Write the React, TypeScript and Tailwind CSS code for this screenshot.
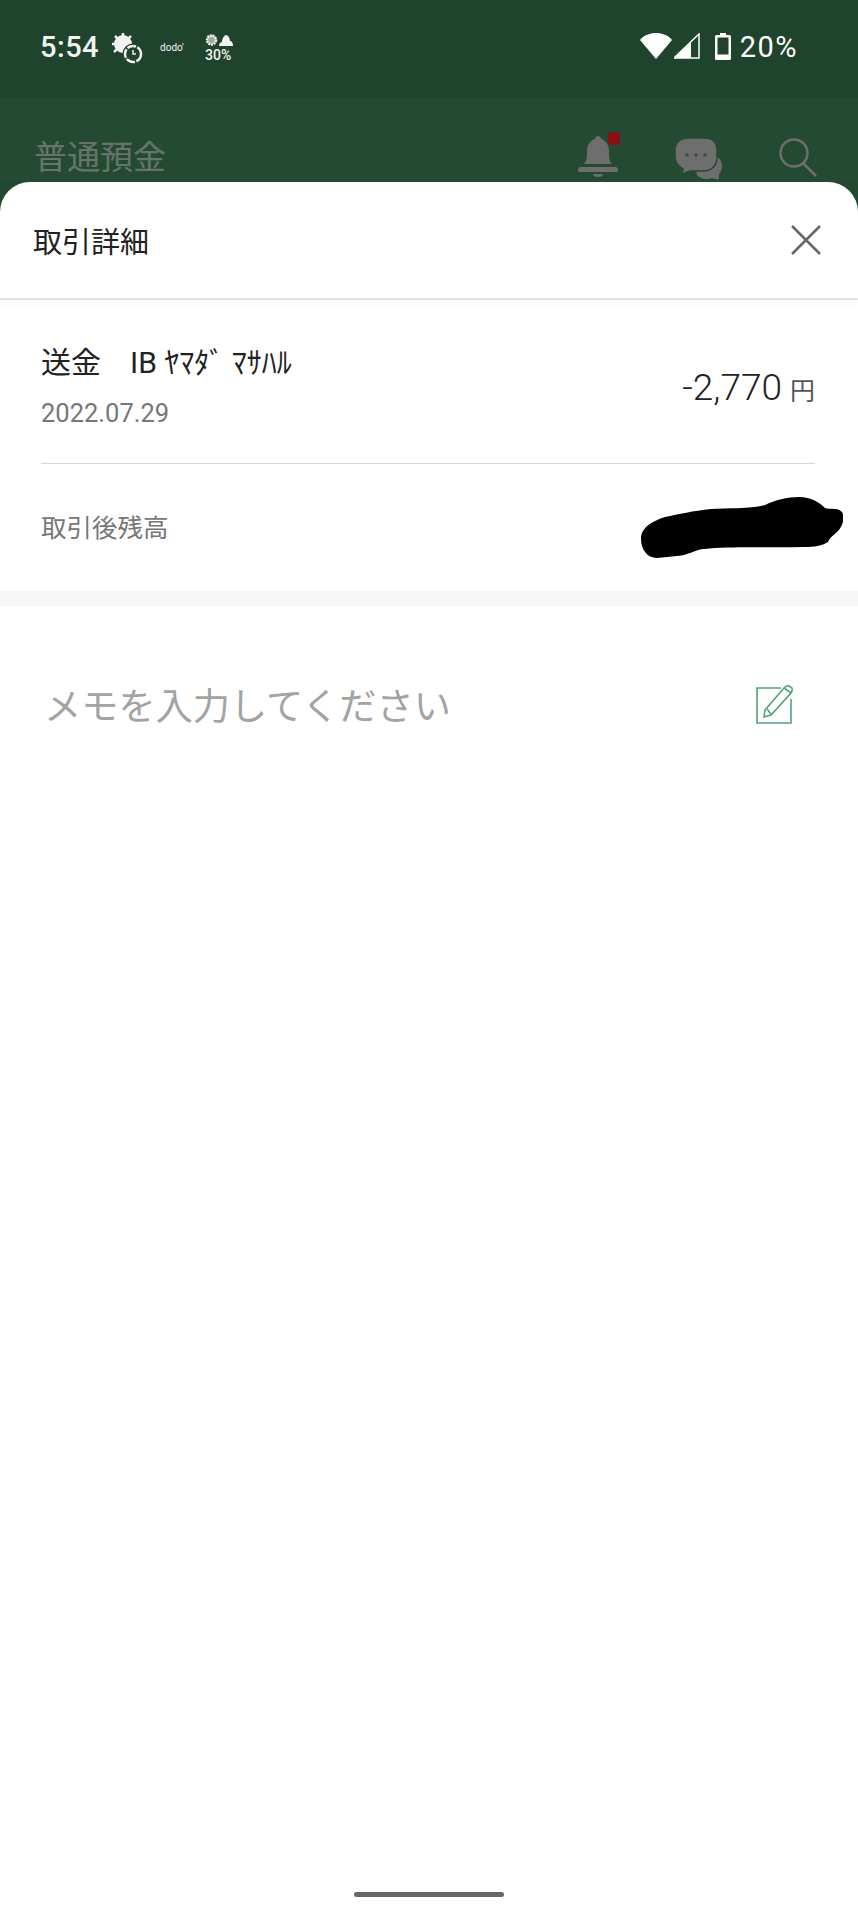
const font = "font-['Roboto','Noto_Sans_CJK_JP',sans-serif]"

function WeatherClock() {
  return (
    <svg width="32" height="32" viewBox="0 0 32 32" fill="#f2f2f2">
      <circle cx="12" cy="11" r="9" />
      <path d="M12 0v4M1 11h3M4 3l3 3M20 3l-3 3M3 19l3-3" stroke="#f2f2f2" strokeWidth="2.500" />
      <circle cx="22" cy="21" r="10.500" fill="#1f432c" />
      <circle cx="22" cy="21" r="8" fill="none" stroke="#f2f2f2" strokeWidth="2.500" strokeDasharray="9 1.500" />
      <path d="M22 17v4h3" fill="none" stroke="#f2f2f2" strokeWidth="1.500" />
    </svg>
  )
}

function SunCloud() {
  return (
    <svg width="28" height="15" viewBox="0 0 28 15" fill="#f2f2f2">
      <circle cx="6.500" cy="7" r="4.500" stroke="#f2f2f2" strokeWidth="2.500" strokeDasharray="2 0.700" fillOpacity="0.600" />
      <path d="M14 13c0-3 2-4 3-4 0-3 2-7 4-7s4 3 4 6c2 0 3 2 3 5z" />
    </svg>
  )
}

function Wifi() {
  return (
    <svg width="32" height="26" viewBox="0 0 32 26" fill="#fff">
      <path d="M0 7C4 2 10 0 16 0s12 2 16 7L16 26z" />
    </svg>
  )
}

function Signal() {
  return (
    <svg width="26" height="26" viewBox="0 0 26 26">
      <path d="M0 25 25 1v24z" fill="none" stroke="#fff" strokeWidth="1.500" />
      <path d="M0 25 17 9v16z" fill="#fff" />
    </svg>
  )
}

function Battery() {
  return (
    <svg width="16" height="27" viewBox="0 0 16 27">
      <path d="M5 0h6v2h3.500A1.500 1.500 0 0 1 16 3.500v22a1.500 1.500 0 0 1-1.500 1.500h-13A1.500 1.500 0 0 1 0 25.500v-22A1.500 1.500 0 0 1 1.500 2H5z" fill="#fff" />
      <rect x="2.500" y="4.500" width="11" height="17" fill="#1f432c" />
    </svg>
  )
}

function Bell() {
  return (
    <svg width="44" height="46" viewBox="0 0 44 46" fill="#6e6e6e">
      <path d="M7 32c3-3 3-7 3-13 0-7 4-11 8-12 0-4 6-4 6 0 4 1 8 5 8 12 0 6 0 10 3 13z" />
      <path d="M1 38c0-2 1-3 3-3h34c2 0 3 1 3 3s-1 2-3 2H4c-2 0-3 0-3-2z" />
      <path d="M16 42h10c0 2-2 3-5 3s-5-1-5-3z" />
      <rect x="31" y="0" width="12" height="13" rx="4" fill="#8b0f14" />
    </svg>
  )
}

function Chat() {
  return (
    <svg width="48" height="42" viewBox="0 0 48 42">
      {/* small bubble behind */}
      <path d="M22 30c6 0 14-4 18-12 4 1 7 5 7 10 0 3-1 6-3 8v4c0 1-2 2-4 1l-3-1c-5 2-12 1-15-3-1-2-1-4 0-7z" fill="#6e6e6e" />
      {/* main bubble */}
      <path d="M13 0h16c9 0 13 5 13 12v8c0 8-6 13-14 13H15l-8 3 1-5C3 28 0 24 0 19v-7C0 5 5 0 13 0z" fill="#6e6e6e" stroke="#254a34" strokeWidth="1.500" />
      <circle cx="12" cy="17" r="1.800" fill="#35503f" />
      <circle cx="21" cy="17" r="1.800" fill="#35503f" />
      <circle cx="30" cy="17" r="1.800" fill="#35503f" />
    </svg>
  )
}

function Search() {
  return (
    <svg width="40" height="40" viewBox="0 0 40 40" fill="none" stroke="#6e6e6e" strokeWidth="2.500">
      <circle cx="16" cy="15" r="13.500" />
      <path d="M25 25 38 38" />
    </svg>
  )
}

function Blob() {
  return (
    <svg width="202" height="62" viewBox="0 0 202 62" fill="#000">
      <path d="M16 61C6 61 0 52 0 42 0 30 12 24 24 20c14-3 28-6 46-8 16-1 40 0 54-4 10-5 22-8 34-8 12 0 20 5 26 11 6 2 12-1 17 4 3 5 1 13-3 18-5 5-8 6-11 12-6 4-14 5-24 5-34 1-72-1-100 2-8 0-14 6-27 7z" />
    </svg>
  )
}

function EditIcon() {
  return (
    <svg width="38" height="40" viewBox="0 0 38 40" fill="none" stroke="#4fa378" strokeWidth="1.600">
      <path d="M25 4H1v35h34V15" />
      <path d="M9 26 28 4c1-1 3-3 5-2l3 2c1 2 0 3-1 5L15 31l-7 2z" />
      <path d="M28 4l7 5M11 25l4 5" />
    </svg>
  )
}

export default function App() {
  return (
    <div className={`${font} flex h-[1907px] w-[858px] flex-col overflow-hidden bg-[#234832]`}>
      {/* status bar */}
      <div className="flex h-[98px] items-start justify-between bg-[#1f432c] pl-[40px] pr-[60px] pt-[33px] text-[#f4f4f4]">
        <div className="flex items-start">
          <span className="text-[29px] font-medium leading-[28px] tracking-[0.5px]">5:54</span>
          <span className="ml-[12px]">
            <WeatherClock />
          </span>
          <span className="ml-[17px] mt-[9px] w-[27px] text-[10px] leading-[12px]">dodo'</span>
          <div className="ml-[18px] flex flex-col">
            <SunCloud />
            <span className="text-[14px] font-medium leading-[14px]">30%</span>
          </div>
        </div>
        <div className="flex items-start">
          <Wifi />
          <span className="ml-[2px]">
            <Signal />
          </span>
          <span className="ml-[15px]">
            <Battery />
          </span>
          <span className="ml-[9px] text-[29px] leading-[28px] tracking-[1.500px] text-white">20%</span>
        </div>
      </div>

      {/* app bar behind the sheet */}
      <div className="flex h-[84px] items-start justify-between bg-[#254a34] pl-[34px] pr-[40px]">
        <h1 className="mt-[39px] text-[33px] leading-[42px] text-[#66756c]">普通預金</h1>
        <div className="flex items-start">
          <span className="mt-[34px]">
            <Bell />
          </span>
          <span className="ml-[54px] mt-[40px]">
            <Chat />
          </span>
          <span className="ml-[55px] mt-[40px]">
            <Search />
          </span>
        </div>
      </div>

      {/* bottom sheet */}
      <div className="relative flex flex-1 flex-col rounded-t-[30px] bg-white">
        <div className="flex h-[118px] items-center justify-between border-b-2 border-[#e4e4e4] pl-[33px] pr-[36px] shadow-[0_3px_6px_rgba(0,0,0,0.04)]">
          <h2 className="mt-[6px] text-[29px] leading-[40px] text-[#222]">取引詳細</h2>
          <svg width="32" height="32" viewBox="0 0 32 32" stroke="#666" strokeWidth="2.500">
            <path d="M2 2 30 30M30 2 2 30" />
          </svg>
        </div>

        <div className="ml-[41px] mr-[43px] flex h-[164px] items-start justify-between border-b border-[#d6d6d6]">
          <div className="flex flex-col pt-[43px]">
            <div className="flex items-center text-[30px] leading-[40px] text-[#222]">
              <span>送金</span>
              <span className="ml-[29px]">IB ﾔﾏﾀﾞ ﾏｻﾊﾙ</span>
            </div>
            <span className="mt-[13px] text-[25.500px] leading-[34px] text-[#777]">2022.07.29</span>
          </div>
          <div className="mt-[65px] flex items-baseline">
            <span className="text-[37px] font-light leading-[46px] text-[#222]">-2,770</span>
            <span className="ml-[8px] text-[25px] leading-[30px] text-[#555]">円</span>
          </div>
        </div>

        <div className="flex h-[127px] items-center justify-between pl-[41px] pr-[15px]">
          <span className="text-[25.500px] leading-[36px] text-[#777]">取引後残高</span>
          <Blob />
        </div>

        <div className="h-[15px] bg-[#f7f7f7]" />

        <div className="flex h-[196px] items-center justify-between pl-[44px] pr-[64px]">
          <span className="mt-[6px] text-[37.200px] leading-[50px] text-[#a3a3a3]">メモを入力してください</span>
          <EditIcon />
        </div>

        <div className="mt-auto mb-[10px] h-[5px] w-[150px] self-center rounded-full bg-[#666]" />
      </div>
    </div>
  )
}
